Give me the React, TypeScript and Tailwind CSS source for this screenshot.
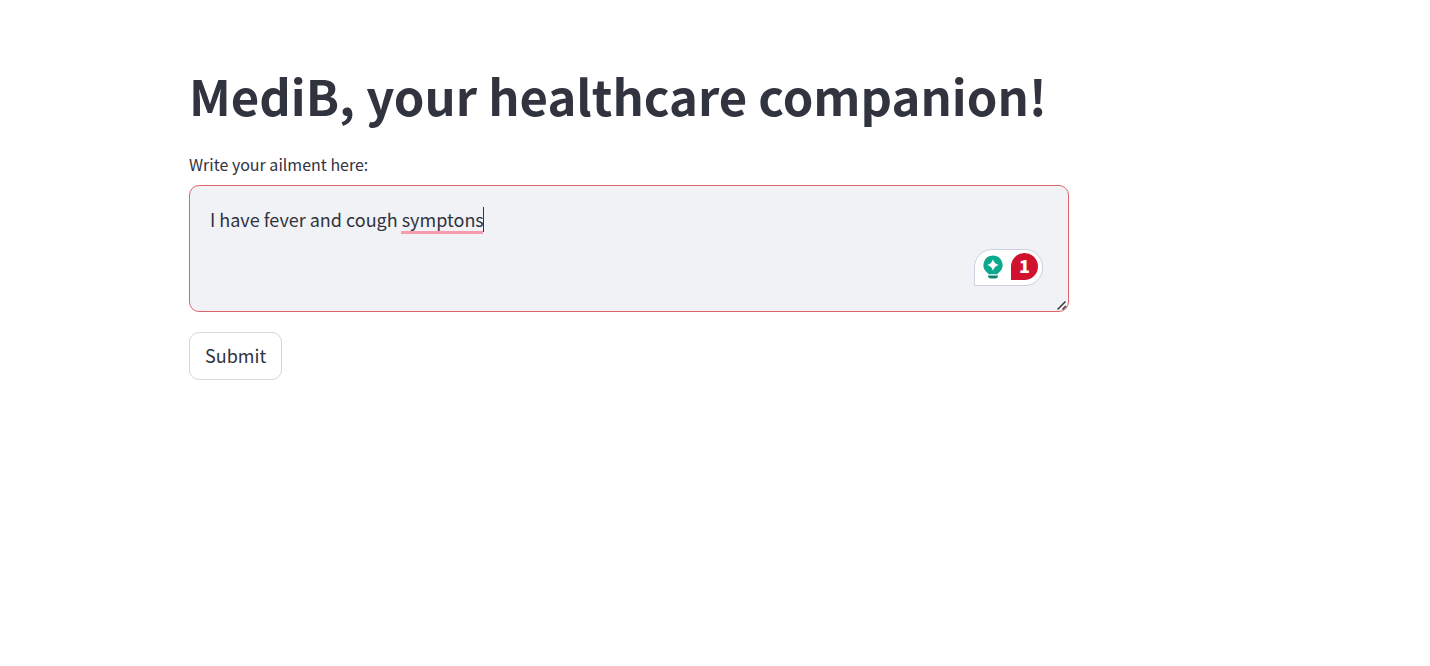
import { useState } from "react";

const SuggestionBadge: React.FC = () => {
  return (
    <div className="flex h-[37px] w-[69px] items-center justify-between rounded-[18px] rounded-bl-none border border-[#ccd0de] bg-white pr-1 pb-0.5 pl-2">
      <svg width="20" height="24" viewBox="0 0 20 24" aria-hidden="true">
        <path
          d="M10 0.500a9.500 9.500 0 0 0-6.200 16.700c1 .9 1.500 1.300 1.700 2.100h9c.2-.8.7-1.200 1.700-2.100A9.500 9.500 0 0 0 10 0.500Z"
          fill="#0aa88c"
        />
        <path
          d="M10 4.200c1.500 3.700 2.100 4.300 5.800 5.800-3.700 1.500-4.300 2.100-5.800 5.800-1.500-3.700-2.100-4.300-5.800-5.800 3.700-1.500 4.300-2.100 5.800-5.800Z"
          fill="#fff"
        />
        <path d="M5 20.500h10c0 2-1 3-3 3H8c-2 0-3-1-3-3Z" fill="#0b8572" />
      </svg>
      <span className="flex size-[27px] items-start justify-center rounded-full rounded-bl-none bg-[#d1122f] text-lg leading-6 font-black text-white">
        1
      </span>
    </div>
  );
};

const App: React.FC = () => {
  const [ailment, setAilment] = useState("I have fever and cough symptons");

  return (
    <main className="min-h-screen bg-white px-[189px] pt-[62px] font-['Noto_Sans_CJK_JP',sans-serif] text-[#31333f]">
      <h1 className="text-[49px] leading-[66px] font-bold whitespace-nowrap">
        MediB, your healthcare companion!
      </h1>
      <form
        className="flex max-w-[880px] flex-col items-start gap-5 pt-6"
        onSubmit={(e) => e.preventDefault()}
      >
        <div className="flex w-full flex-col gap-2">
          <label htmlFor="ailment" className="text-base leading-[25px]">
            Write your ailment here:
          </label>
          <div className="relative">
            <textarea
              id="ailment"
              value={ailment}
              onChange={(e) => setAilment(e.target.value)}
              spellCheck={false}
              className="block h-[127px] w-full resize-none rounded-[10px] border border-[#e0656b] bg-[#f0f2f6] p-5 text-lg leading-[26px] outline-none"
            />
            {/* spelling mark and caret */}
            <div className="pointer-events-none absolute top-[22px] left-[212px] flex h-[27px] w-[83px] items-end">
              <span className="h-[3px] grow bg-[#f79bae]" />
              <span className="h-[25px] w-px self-start bg-[#31333f]" />
            </div>
            <div className="pointer-events-none absolute inset-0 flex items-end justify-end p-[26px]">
              <SuggestionBadge />
            </div>
            <div className="pointer-events-none absolute inset-0 flex items-end justify-end p-0.5">
              <svg width="10" height="9" viewBox="0 0 10 9" aria-hidden="true">
                <path
                  d="M0.500 8.500 8.500 0.500M5.500 8.500 9 5"
                  stroke="#3c3c40"
                  strokeWidth="1.500"
                  fill="none"
                />
              </svg>
            </div>
          </div>
        </div>
        <button
          type="submit"
          className="cursor-pointer rounded-[10px] border border-[#d6d6d9] bg-white px-[15px] pt-2.5 pb-3 text-lg leading-6"
        >
          Submit
        </button>
      </form>
    </main>
  );
};

export default App;
